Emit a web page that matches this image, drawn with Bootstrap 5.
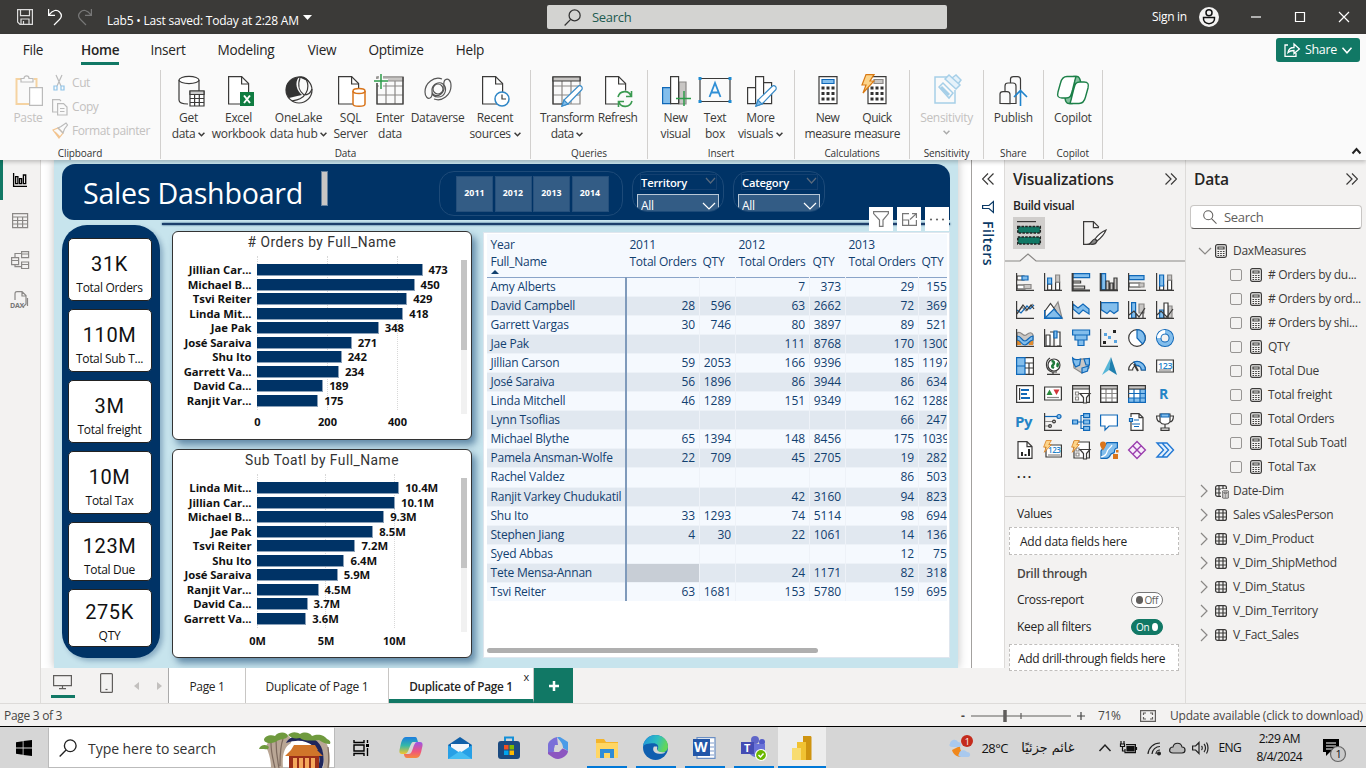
<!DOCTYPE html>
<html lang="en">
<head>
<meta charset="utf-8">
<title>Lab5</title>
<meta name="viewport" content="width=device-width, initial-scale=1">
<link href="https://cdn.jsdelivr.net/npm/bootstrap@5.3.0/dist/css/bootstrap.min.css" rel="stylesheet">
<style>
*{box-sizing:border-box}
body{width:1366px;height:768px;overflow:hidden;font-family:"Open Sans","Noto Sans",sans-serif;font-size:12px;line-height:16px;color:#252423;background:#f3f2f1;letter-spacing:-.025em;white-space:nowrap}
svg{display:block;flex:none;overflow:visible}
svg:not([fill]){fill:none}
svg:not([stroke-width]){stroke-width:1.2}
.k{stroke:#3b3a39}.b{stroke:#1068b8}.g{stroke:#8a8886}.lb{fill:#83beec}.lg{fill:#c8c6c4}.wf{fill:#fff}.kf{fill:#252423}.bf{fill:#1068b8}
.titlebar{height:34px;background:#3b3a38;color:#fff}
.titlesearch{width:400px;height:24px;background:#d3d3d1;color:#215b50;border-radius:2px;font-size:13px;margin-left:235px;padding-left:17px;gap:11px}
.ribbon{height:126px;background:#fafafa;position:relative;z-index:3;box-shadow:0 2px 4px rgba(0,0,0,.22)}
.tabs{height:32px;font-size:13.6px;letter-spacing:-.02em}
.tabs span{height:31px;line-height:31px;text-align:center;display:block}
.tabs .on{font-weight:600;border-bottom:3px solid #117865}
.sharebtn{width:84px;height:24px;background:#117865;border-radius:3px;color:#fff;font-weight:500;font-size:12.5px}
.grp{height:89px;border-right:1px solid #d2d0ce;position:relative}
.grplabel{font-size:10px;height:12px;line-height:12px;text-align:center;color:#333;letter-spacing:-.01em;margin-top:-1px}
.tool{display:flex;flex-direction:column;align-items:center;height:78px;text-align:center;font-size:12px;color:#3b3a39}
.tool svg{margin:5px 0 3px;width:30px;height:32px}
.dim{color:#c3c1bf}
.rail{width:41px;background:#f3f2f1;border-right:1px solid #dddbd9}
.rail div{height:40px;display:flex;align-items:center;justify-content:center}
.rail .on{border-left:3px solid #117865;padding-right:3px}
.stage{width:930px;background:#fff;padding-left:13px;height:508px;overflow:hidden}
.report{width:904px;height:508px;background:#c7e4ed;box-shadow:0 0 9px rgba(0,0,0,.25);padding:4px 8px 0 8px;position:relative}
.banner{height:56px;background:#036;border-radius:13px 14px 0 12px;color:#fff}
.banner h1{font-size:28.6px;line-height:40px;font-weight:400;margin:9px 0 0 21px;width:238px;letter-spacing:-.008em}
.slicer{width:184px;height:45px;border:1px solid #1d4a78;border-radius:15px;margin:7px 0 0 111px;padding:4px 0 0 16px;gap:1.5px}
.slicer span{width:37px;height:36px;background:#335c85;border:1px solid #254f7b;font-size:8.8px;font-weight:700;line-height:33px;text-align:center;letter-spacing:.01em}
.drop{width:92px;height:41px;border:1px solid #1d4a78;border-radius:15px;margin-top:7px;padding:2px 4px 0;overflow:hidden}
.drop .dt{height:16px;border:1px solid #123f70;margin:0 2px 0 3px;font-size:11.2px;font-weight:600;line-height:16px;padding:0 1px 0 0;letter-spacing:-.015em}
.drop .ds{height:22px;margin-top:4px;border:1.5px solid #b9c8d7;background:#335c85;line-height:22px;padding:0 3px;font-size:12px}
.rule{height:2px;background:#1d3f6b;margin:3px 0 1px 100px;box-shadow:0 0 2px #036}
.side{width:98px;height:433px;background:#036;border-radius:25px;padding:13px 8.5px 0 5.5px;margin-top:-1px;box-shadow:3px 3px 5px rgba(0,51,102,.3)}
.kpi{height:63px;margin-bottom:8px;background:#fff;border:1px solid #222;border-radius:5px;text-align:center;color:#111;padding-top:12px}
.kpi b{display:block;font:400 20px/26px Roboto,sans-serif;letter-spacing:.03em}
.kpi span{display:block;line-height:18px;font-size:12px;padding-top:2px}
.viz{width:300px;height:209px;background:#fff;border:1px solid #333;border-radius:6px;box-shadow:4px 5px 7px rgba(0,51,102,.5);position:relative;margin-bottom:9px}
.viz h2{font:400 13.8px/20px Roboto,sans-serif;letter-spacing:.035em;text-align:center;margin:0;height:33px;color:#333}
.plot{height:154px}
.bars{width:288px;font-size:11.3px;font-weight:700;color:#111;position:relative;letter-spacing:-.005em;padding-top:3px}
.brow{height:14.5px;display:flex;align-items:center;line-height:14px}
.brow .nm{width:78.5px;display:flex;justify-content:flex-end;margin-right:5.5px}
.brow i{height:12px;background:#036;border:1px solid #8aa0b8;border-width:0 1px 1px 0;margin-right:6px}
.gridline{position:absolute;top:-4px;height:154px;border-left:1px dotted #d8d8d8}
.axis{font-size:11px;font-weight:700;color:#111;height:16px;position:relative;letter-spacing:0}
.axis span{position:absolute;transform:translateX(-50%);top:0}
.vs{width:5.5px;height:154px;background:#f1f1f1}.vs div{height:90px;background:#c4c4c4}
.matrix{width:467px;height:426px;background:#fff;border:1px solid #dfe6ee;padding:1px 2px 0 3px;margin-left:11px;color:#12406f;font-size:12px}
.mwin{overflow:hidden;height:414px}
.mgrid{table-layout:fixed;width:467px;border-collapse:collapse;letter-spacing:-.02em}
.mgrid td{padding:0 3.5px;text-align:right;line-height:18px;border-right:1px solid #eef2f8;overflow:hidden;letter-spacing:-.005em}
.mgrid tbody tr{height:19.06px;border-top:1px solid #edf2f8}
.mgrid td:first-child{text-align:left;border-right:2px solid #7f9abb;letter-spacing:-.018em}
.mgrid tr{background:#f5f9fe}.mgrid tbody tr:nth-child(even){background:#e1e8f0}
.mgrid th{font-weight:400;padding:0 3.5px;text-align:left;line-height:17px;overflow:visible}
.mgrid thead tr:last-child{border-bottom:1.5px solid #8aa4c8}
.mgrid .hot{background:#c8ced6}
.hs{width:331px;height:5px;border-radius:3px;background:#afafaf}
.over{position:absolute;top:47px;right:9px;display:flex;gap:4px}
.over div{width:24px;height:24px;background:#fff;display:flex;align-items:center;justify-content:center}
.filters{width:34px;background:#fff;border-left:1px solid #a3a19f;border-right:1px solid #dddbd9;height:508px;color:#0b3a66}
.filters span{writing-mode:vertical-rl;font-size:14px;font-weight:600;letter-spacing:.035em;line-height:18px}
.pane{height:543px;background:#f3f2f1}
.vp{width:180px}.dp{width:180px;border-left:1px solid #dddbd9}
.pt{font-size:15.6px;font-weight:600;height:38px;line-height:38px;letter-spacing:-.012em}
.vgrid{display:grid;grid-template-columns:repeat(6,28px);grid-auto-rows:28px;margin:5px 0 0 6px;place-items:center}
.well{background:#fff;border:1px dashed #c0bebc;height:28px;line-height:27px;margin:0 6px 0 4px;padding-left:10px;letter-spacing:-.022em}
.tog{width:32px;height:16px;border-radius:8px;border:1px solid #777;background:#fff;font-size:10px;line-height:14px;color:#605e5c;display:flex;align-items:center;gap:1px;padding:0 4px}
.tog i{width:8px;height:8px;border-radius:50%;background:#605e5c}
.tog.on{background:#117865;border-color:#117865;color:#fff;gap:3px}.tog.on i{background:#fff}
.dsearch{height:24px;border:1px solid #c8c6c4;border-bottom-color:#605e5c;border-radius:4px;background:#fff;margin:7px 4px 0;color:#605e5c;font-size:13px;padding-left:12px;gap:7px}
.trow{height:24px;display:flex;align-items:center;color:#3b3a39}
.tcheck{width:12px;height:12px;border:1px solid #979593;border-radius:2px;margin:0 8px 0 44px}
.strip{height:35px;width:964px}
.ptab{height:35px;background:#fff;border-right:1px solid #c8c6c4;line-height:37px;text-align:center;letter-spacing:-.02em}
.status{height:24px;border-top:1px solid #dddbd9;color:#484644;font-size:12px;border-bottom:1.5px solid #000;padding-top:2px}
.taskbar{height:41px;background:#d6d6d6;color:#111}
.tsearch{width:287px;height:41px;background:#fff;border:1px solid #bbb;border-top-color:#ddd;font-size:14px;padding-left:10px;color:#333}
.app{height:41px;width:49px;display:flex;align-items:center;justify-content:center}
.app.run{border-bottom:2.5px solid #0078d7;margin:0 4.4px;width:40.2px;padding-top:2px}
</style>
</head>
<body>
<svg width="0" height="0" style="position:absolute"><defs>
<symbol id="calc" viewBox="0 0 12 14"><rect x=".6" y=".6" width="10.8" height="12.8" rx="1.8" class="k"/><path d="M3 3h6v2H3z" class="k"/><path d="M2.5 7.5h1.6M5.2 7.5h1.6M7.9 7.5h1.6M2.5 9.5h1.6M5.2 9.5h1.6M7.9 9.5h1.6M2.5 11.5h1.6M5.2 11.5h1.6M7.9 11.5h1.6" class="k" /></symbol>
<symbol id="tbl" viewBox="0 0 12 12"><rect x=".6" y=".6" width="10.8" height="10.8" rx="2" class="k"/><path d="M.6 4h10.8M.6 8h10.8M4 .6v10.8M8 .6v10.8" class="k"/></symbol>
<symbol id="chev" viewBox="0 0 6 4"><path d="M.5.5 3 3 5.5.5" stroke="currentColor" stroke-width="1.3"/></symbol>
<symbol id="lens" viewBox="0 0 16 16"><circle cx="10" cy="6" r="5.2" stroke="currentColor"/><path d="M6.3 9.8.6 15.5" stroke="currentColor"/></symbol>
<symbol id="dbl" viewBox="0 0 12 12"><path d="M.5.5 6 6 .5 11.500M6 .5 11.500 6 6 11.500" stroke="#3b3a39"/></symbol>
<symbol id="pageic" viewBox="0 0 22 30"><path d="M.6.6h13l7 7V28H.6z" class="k" fill="#fff"/><path d="M13.600.6V8h7" class="k"/></symbol>
<symbol id="pen" viewBox="0 0 22 22"><path d="m1 21 2-6L17 1.500a2.400 2.400 0 0 1 3.500 3.500L7 19z" stroke="#3a8cc8" fill="#fff"/><path d="m1 21 2-6 4 4z" fill="#83beec" stroke="#3a8cc8"/></symbol>
<symbol id="bolt" viewBox="0 0 14 20"><path d="M5 .6h8L9 7h4L2 19l3-8H1z" fill="#fcd48a" stroke="#d97a14"/></symbol>
</defs></svg>

<header class="titlebar d-flex align-items-center">
  <svg width="16" height="16" style="margin-left:17px" stroke="#ddd"><path d="M.6.6h14.800v14.800H3l-2.400-2.400zM3.500.6v6h9v-6M4 15V10h8v5M6.500 15v-3"/></svg>
  <svg width="14" height="16" style="margin-left:15px" stroke="#fff"><path d="M.6 0v6.400H7M.8 6.200C5 .5 9 .5 11.500 3c3 3 2 5.500 0 7.500L6 16"/></svg>
  <svg width="14" height="16" style="margin-left:16px" stroke="#777"><path d="M13.400 0v6.400H7M13.200 6.200C9 .5 5 .5 2.500 3c-3 3-2 5.500 0 7.500L8 16"/></svg>
  <span style="margin-left:15px;padding-top:6px;width:190px;letter-spacing:-.017em" class="lh-sm">Lab5 • Last saved: Today at 2:28 AM</span>
  <svg width="9" height="5" style="margin-left:6px"><path d="M0 0h9L4.500 5z" fill="#fff"/></svg>
  <div class="titlesearch d-flex align-items-center"><svg width="17" height="17" color="#333"><use href="#lens"/></svg>Search</div>
  <span style="margin-left:205px;width:37px">Sign in</span>
  <svg width="20" height="20" style="margin-left:10px"><circle cx="10" cy="10" r="10" fill="#f3f2f1"/><circle cx="10" cy="5.800" r="3" stroke="#111" stroke-width="1.5"/><path d="M4.500 10.500h11c.5 4-2 6.200-5.500 6.200s-6-2.200-5.500-6.200z" stroke="#111" stroke-width="1.500"/></svg>
  <svg width="10" height="10" style="margin-left:32px" stroke="#fff"><path d="M0 5h10"/></svg>
  <svg width="10" height="10" style="margin-left:34px" stroke="#fff"><path d="M.5.5h9v9h-9z"/></svg>
  <svg width="10" height="10" style="margin-left:34px" stroke="#fff"><path d="m0 0 10 10M10 0 0 10"/></svg>
</header>

<section class="ribbon">
  <div class="tabs d-flex">
    <span style="margin-left:17px;width:32px">File</span><span class="on" style="margin-left:32px;width:38px">Home</span><span style="margin-left:29px;width:40px">Insert</span><span style="margin-left:28px;width:60px">Modeling</span><span style="margin-left:30px;width:32px">View</span><span style="margin-left:29px;width:58px">Optimize</span><span style="margin-left:28px;width:34px">Help</span>
    <div class="sharebtn d-flex align-items-center justify-content-between ms-auto mt-1 ps-2 pe-2" style="margin-right:6px">
      <svg width="16" height="14" stroke="#fff" stroke-width="1.3"><path d="M4 2H1v11.400h11V10M4 9.500C4.500 6 6.500 4.500 10 4.500V1l5.400 5-5.400 4.500V7.500C7.500 7.500 5.500 8 4 9.500z"/></svg>Share<svg width="10" height="7" stroke="#fff" stroke-width="1.5"><path d="m.5.8 4.500 5 4.500-5"/></svg></div>
  </div>
  <div class="d-flex" style="padding-top:4px">
    <div class="grp" style="width:161px">
      <div class="d-flex dim" style="height:78px;padding-left:13px">
        <div class="tool dim" style="width:30px"><svg width="30" height="32" viewBox="0 0 30 32"><path d="M8 4H3.500v25H16M21 4h2.500v8" stroke="#f5d3a2" stroke-width="2"/><path d="M8 7V3.500h3c0-3.500 5-3.500 5 0h4V7z" stroke="#bbb"/><path d="M16.600 12.600h12.800v17.800H16.600z" stroke="#bbb" fill="#fff"/></svg>Paste</div>
        <div style="margin-left:9px;letter-spacing:-.035em">
          <div class="d-flex align-items-center" style="height:24px;gap:6px;margin-top:1px"><svg width="14" height="16" stroke="#bbb"><path d="M4 0l5 11M10 0 5 11"/><path d="M2 11h3v4H2zM9 11h3v4H9z" stroke="#8fc3e8"/></svg>Cut</div>
          <div class="d-flex align-items-center" style="height:24px;gap:4px"><svg width="16" height="16" stroke="#bbb"><path d="M5 13H.6V.6h7L9 2M5.600 4.600h6l3.400 3.400v8H5.600zM8 9.500h4.500M8 12.500h4.500"/></svg>Copy</div>
          <div class="d-flex align-items-center" style="height:24px;gap:4px"><svg width="16" height="16" stroke="#bbb"><path d="m1 7 5-2 5 5-4 5zM3 9l5 5" stroke="#f3c48f"/><path d="m6 5 3-1.500 5-3.500L15.500 2l-3 4L11 10z"/></svg>Format painter</div>
        </div>
      </div>
      <div class="grplabel">Clipboard</div>
    </div>
    <div class="grp" style="width:370px">
      <div class="d-flex" style="padding-left:1px">
        <div class="tool" style="width:53px"><svg viewBox="0 0 30 32"><path d="M5 5v20c0 3 3 4 9 4M25 5v11" class="k"/><ellipse cx="15" cy="5" rx="10" ry="3.600" class="k" fill="#fff"/><path d="M16 16h14v15H16z" class="k wf"/><path d="M16 16h14v3.500H16z" class="k" fill="#ccc"/><path d="M16 23.500h14M16 27.500h14M20.600 19v12M25.300 19v12" class="k"/></svg>Get<br><span>data <svg class="d-inline m-0" style="width:7px;height:5px"><use href="#chev"/></svg></span></div>
        <div class="tool" style="width:47px"><svg viewBox="0 0 30 32"><use href="#pageic" x="4" y="1" width="22" height="30"/><path d="M16 17h14v14H16z" fill="#107c41"/><path d="m20 20.500 6 7.500M26 20.500 20 28" stroke="#fff" stroke-width="2"/></svg>Excel<br>workbook</div>
        <div class="tool" style="width:73px"><svg viewBox="0 0 30 32"><circle cx="15" cy="15" r="13" class="k"/><path d="M5 23C-2 13 4 3 15 2c-5 6-2 14 3 18-5 1-9 2-13 3zM13 2c6-2 10 0 13 6-4-3-6-4-13-6z" fill="#333"/><path d="M16 3c-3 8 0 14 4 17M22 4c2 4 3 9 0 14-3 6-9 7-14 8M20 20c4 0 7-3 8-6" class="k"/></svg>OneLake<br><span>data hub <svg class="d-inline m-0" style="width:7px;height:5px"><use href="#chev"/></svg></span></div>
        <div class="tool" style="width:31px"><svg viewBox="0 0 30 32"><use href="#pageic" x="2" y="1" width="22" height="30"/><path d="M17 16v13c0 3 12 3 12 0V16" stroke="#d9741a" fill="#fff" stroke-width="1.5"/><ellipse cx="23" cy="16" rx="6" ry="2.500" stroke="#d9741a" fill="#fff" stroke-width="1.500"/></svg>SQL<br>Server</div>
        <div class="tool" style="width:48px"><svg viewBox="0 0 30 32"><path d="M2 2h26v27H2zM2 11h26M2 20h26M11 6v23M20 6v23" class="g"/><path d="M2 2h26v4H2z" class="g lg"/><path d="M2 7v22h26V2" class="k"/><path d="M6-1v15M-1 6h14" stroke="#fafafa" stroke-width="4"/><path d="M6-1v15M-1 6h14" stroke="#2c9c4a" stroke-width="1.500"/></svg>Enter<br>data</div>
        <div class="tool" style="width:47px"><svg viewBox="0 0 30 32" stroke="#555"><path d="M19 4C11 1 2 8 2 17c0 5 3 7 5 6 3-1 2-5 2-9 1-5 7-8 11-5 5 5 2 13-5 13-4 0-6-2-6-6"/><path d="M11 24c8 3 17-4 17-13 0-6-3-8-6-6-2 2-1 5-1 9-1 5-7 9-11 5"/><circle cx="15" cy="14" r="5"/></svg>Dataverse</div>
        <div class="tool" style="width:68px"><svg viewBox="0 0 30 32"><use href="#pageic" x="2" y="1" width="22" height="30"/><circle cx="22" cy="24" r="7" stroke="#2f86c6" stroke-width="1.500" fill="#fff"/><path d="M22 19.500V24h4" class="k"/></svg>Recent<br><span>sources <svg class="d-inline m-0" style="width:7px;height:5px"><use href="#chev"/></svg></span></div>
      </div><div class="grplabel">Data</div>
    </div>
    <div class="grp" style="width:117px">
      <div class="d-flex justify-content-start"><div class="tool" style="width:72px;letter-spacing:-.04em"><svg viewBox="0 0 30 32"><path d="M1 2h27v27H1zM1 11h27M1 20h27M10 6v23M19 6v23" class="g"/><path d="M28 6V2H1v27h12" class="k"/><path d="M1 2h27v4H1z" class="k lg"/><use href="#pen" x="9" y="10" width="22" height="22"/></svg>Transform<br><span>data <svg class="d-inline m-0" style="width:7px;height:5px"><use href="#chev"/></svg></span></div>
      <div class="tool align-items-center" style="width:29px;letter-spacing:-.04em"><svg viewBox="0 0 30 32"><use href="#pageic" x="2" y="1" width="22" height="30"/><circle cx="22" cy="24" r="8.500" fill="#fafafa"/><path d="M15 22c2-7 11-7 13-1M29 26c-2 7-11 7-13 1M28.500 16v5.500H23M15.500 32v-5.500H21" stroke="#3a9a50" stroke-width="1.600"/></svg>Refresh</div></div><div class="grplabel">Queries</div>
    </div>
    <div class="grp" style="width:147px">
      <div class="d-flex" style="padding-left:9px"><div class="tool" style="width:37px"><svg viewBox="0 0 30 32"><path d="M1.600 12.600h8v16h-8z" class="b lb"/><path d="M18 7h7v22h-7z" class="g lg"/><path d="M9.600 1.600h8v27h-8z" class="k wf"/><path d="M23 16v15M15 23.500h15" stroke="#2c9c4a" stroke-width="1.500"/></svg>New<br>visual</div>
      <div class="tool" style="width:42px"><svg viewBox="0 0 30 32"><path d="M0 3.500h30v23H0z" class="k"/><path d="M-1.500 2h3v3h-3zM28.500 2h3v3h-3zM-1.500 25h3v3h-3zM28.500 25h3v3h-3z" fill="#1f8ad0"/><path d="M9.500 22 15 8l5.500 14M11.500 17.500h7" stroke="#2f8fd6" stroke-width="1.800"/></svg>Text<br>box</div>
      <div class="tool" style="width:49px"><svg viewBox="0 0 30 32"><path d="M1.600 12.600h8v16h-8zM17.600 7.600h8v21h-8zM9.600 1.600h8v27h-8z" class="k wf"/><use href="#pen" x="9" y="10" width="22" height="22"/></svg>More<br><span>visuals <svg class="d-inline m-0" style="width:7px;height:5px"><use href="#chev"/></svg></span></div></div><div class="grplabel">Insert</div>
    </div>
    <div class="grp" style="width:115px">
      <div class="d-flex" style="padding-left:8px;letter-spacing:-.04em"><div class="tool" style="width:49px"><svg viewBox="0 0 30 32"><path d="M6 1.600h18v27H6z" class="k wf"/><path d="M9 4.500h12v4H9z" class="b lb"/><path d="M8.500 13h13M8.500 18.500h13M8.500 24h13" stroke="#333" stroke-width="3" stroke-dasharray="3 2"/></svg>New<br>measure</div>
      <div class="tool" style="width:50px"><svg viewBox="0 0 30 32"><path d="M6 1.600h18v27H6z" class="k wf"/><path d="M12 4.500h9v4h-9z" class="g lg"/><path d="M8.500 13h13M8.500 18.500h13M8.500 24h13" stroke="#333" stroke-width="3" stroke-dasharray="3 2"/><use href="#bolt" x="-1" y="-1" width="14" height="20"/></svg>Quick<br>measure</div></div><div class="grplabel">Calculations</div>
    </div>
    <div class="grp" style="width:74px"><div class="tool dim"><svg viewBox="0 0 30 32" stroke="#a6cfe8" stroke-width="1.500"><path d="M16 2H3v26h20V15"/><path d="m7 12 4-4 10 10-4 5z"/><path d="m9 12 8 8" stroke-width="3"/><path d="m13 4 4-4 11 10-4 4zM20 3l4-3 5 5-3 4" fill="#e6f2fa"/></svg>Sensitivity<br><svg class="m-0 mt-1" style="width:7px;height:5px;color:#aaa"><use href="#chev"/></svg></div><div class="grplabel">Sensitivity</div></div>
    <div class="grp" style="width:59.500px"><div class="tool"><svg viewBox="0 0 30 32"><path d="M2 28.500V19c0-2 1-2.400 3-2.400h4c2 0 3 1 3 3v9zM7 16v-5c0-2 1-3 3-3h5c2 0 3 1 3 3v17.500h-6M12.500 8V4c0-1.500 1-2.400 3-2.400h4c2 0 3 1 3 3V15" class="k"/><path d="M22.500 31V16M16 22l6.500-6.500L29 22" stroke="#1f83cc" stroke-width="1.600"/></svg>Publish</div><div class="grplabel">Share</div></div>
    <div class="grp" style="width:59.500px"><div class="tool"><svg viewBox="0 0 30 32" stroke="#1c8048" stroke-width="1.400"><path d="M16 1.500h3c3 0 3 3 4 7h-7zM14 28.500h-3c-3 0-4-3-4-7h7z" fill="#86c0a0"/><path d="M18 1.500H9C5 1.500 3.500 4 2.500 8L0 17c-1 4 0 6 4 6h4c5 0 5-3 6.500-8l2-8c.6-3 1.500-5 1.500-5.500zM12 28.500h9c4 0 5.500-2.500 6.500-6.500L30 13c1-4 0-6-4-6h-4c-5 0-5 3-6.500 8l-2 8c-.6 3-1.500 5-1.500 5.500z" fill="#fff"/></svg>Copilot</div><div class="grplabel">Copilot</div></div>
    <svg width="9" height="6" class="ms-auto align-self-end" style="margin:0 5px 5px 0" stroke="#222" stroke-width="2"><path d="M.5 5.500 4.500 1l4 4.500"/></svg>
  </div>
</section>

<main class="d-flex" style="height:543px">
 <nav class="rail">
  <div class="on"><svg width="14" height="14" stroke="#000" stroke-width="1.300"><path d="M.6 0v13.400H14M2.600 3.600h2.300v7H2.600zM6.600 5.600h2v5h-2zM10.400 2h2.300v8.600h-2.300z"/></svg></div>
  <div><svg width="16" height="15" class="g"><path d="M.6.6h15v14H.6zM.6 4h15M.6 7.500h15M.6 11h15M5.600 4v10.600M10.600 4v10.600"/></svg></div>
  <div><svg width="18" height="18" class="g"><path d="M.6 6.600h7v7h-7zM.6 9.500h7M10.600.6h7v6h-7zM10.600 3h7M10.600 11h7v6.500h-7zM10.600 13.500h7M4 6.600V2.500h6.600M4 13.600v2h6.600"/></svg></div>
  <div><svg width="18" height="18" class="g"><path d="M4 9V3C4 1 5 .6 6 .6h5l4 4V13l-3 3M11 .6V5h4M16.500 7v8"/><text x="-1" y="16.500" font-size="7" font-weight="700" fill="#777" stroke="none" letter-spacing="-.2">DAX</text></svg></div>
 </nav>
 <div>
  <div class="d-flex">
  <div class="stage"><div class="report">
   <div class="banner d-flex">
    <h1>Sales Dashboard</h1><div style="width:7px;height:35px;background:#c8c6c4;border:1px solid #64819e;margin-top:7px"></div>
    <div class="slicer d-flex"><span>2011</span><span>2012</span><span>2013</span><span>2014</span></div>
    <div class="drop" style="margin-left:9px"><div class="dt d-flex justify-content-between">Territory<svg width="9" height="6" style="margin-top:3px" stroke="#5a6a7d"><path d="m0 0 4.500 5L9 0"/></svg></div><div class="ds d-flex justify-content-between">All<svg width="12" height="7" style="margin:8px 0 0" stroke="#fff"><path d="m0 0 6 6 6-6"/></svg></div></div>
    <div class="drop" style="margin-left:9px"><div class="dt d-flex justify-content-between">Category<svg width="9" height="6" style="margin-top:3px" stroke="#5a6a7d"><path d="m0 0 4.500 5L9 0"/></svg></div><div class="ds d-flex justify-content-between">All<svg width="12" height="7" style="margin:8px 0 0" stroke="#fff"><path d="m0 0 6 6 6-6"/></svg></div></div>
   </div>
   <div class="rule"></div>
   <div class="d-flex">
    <div class="side">
     <div class="kpi"><b>31K</b><span>Total Orders</span></div><div class="kpi"><b>110M</b><span>Total Sub T...</span></div><div class="kpi"><b>3M</b><span>Total freight</span></div><div class="kpi"><b>10M</b><span>Total Tax</span></div><div class="kpi" style="height:59px;padding-top:10px"><b>123M</b><span>Total Due</span></div><div class="kpi" style="height:58px;padding-top:9px"><b>275K</b><span>QTY</span></div>
    </div>
    <div style="margin:5px 0 0 12px">
     <div class="viz"><h2># Orders by Full_Name</h2><div class="plot d-flex" style="margin-top:-5px"><div class="bars" id="c1"></div><div class="vs"><div></div></div></div><div class="axis"><span style="left:84.500px">0</span><span style="left:154.500px">200</span><span style="left:224.500px">400</span></div></div>
     <div class="viz"><h2>Sub Toatl by Full_Name</h2><div class="plot d-flex" style="margin-top:-5px"><div class="bars" id="c2"></div><div class="vs"><div></div></div></div><div class="axis"><span style="left:84.500px;top:1px">0M</span><span style="left:153px;top:1px">5M</span><span style="left:221.500px;top:1px">10M</span></div></div>
    </div>
    <div class="matrix" style="margin-top:6px">
     <div class="mwin"><table class="mgrid"><colgroup><col style="width:139px"><col style="width:73px"><col style="width:36px"><col style="width:74px"><col style="width:36px"><col style="width:73px"><col style="width:36px"></colgroup>
      <thead><tr style="height:19px;vertical-align:bottom"><th>Year</th><th>2011</th><th></th><th>2012</th><th></th><th>2013</th><th></th></tr>
      <tr style="height:24.500px;vertical-align:top"><th>Full_Name<svg width="8" height="4"><path d="M0 4h8L4 0z" fill="#12406f"/></svg></th><th>Total Orders</th><th>QTY</th><th>Total Orders</th><th>QTY</th><th>Total Orders</th><th>QTY</th></tr></thead><tbody id="mb"></tbody></table></div>
     <div class="hs"></div>
    </div>
   </div>
   <div class="over"><div><svg width="16" height="16" stroke="#777"><path d="M.6.6h14.800v2L10 9v6.400H6.500V9L.6 2.600z"/></svg></div><div><svg width="15" height="13" stroke="#777"><path d="M7 .6H.6v11.800h13.800V7M.6 7h6v5.400M8 6.500 14.400.6M10 .6h4.400V5"/></svg></div><div><svg width="16" height="3" fill="#666"><circle cx="2" cy="1.500" r="1.100"/><circle cx="8" cy="1.500" r="1.100"/><circle cx="14" cy="1.500" r="1.100"/></svg></div></div>
  </div></div>
  <div class="filters d-flex flex-column align-items-center"><svg width="12" height="12" style="margin-top:13px;transform:scaleX(-1)"><use href="#dbl"/></svg><svg width="12" height="12" style="margin:16px 0 8px" stroke="#0b3a66"><path d="M11.400.6v10.800L7 7.500H.6v-3H7z"/></svg><span>Filters</span></div>
  </div>
  <div class="strip d-flex">
   <div class="d-flex" style="width:128px;border-right:1px solid #aaa">
    <div style="width:24px;margin-left:10px;border-bottom:3px solid #117865;height:30px;padding:7px 0 0 2px"><svg width="19" height="14" stroke="#605e5c"><path d="M.6.6h17.800v10H.6zM9.500 10.600v3M6 13.600h7"/></svg></div>
    <svg width="13" height="20" style="margin:5px 0 0 25px" stroke="#605e5c"><rect x=".6" y=".6" width="11.800" height="18.800" rx="1"/><path d="M5.500 16.500h2"/></svg>
    <svg width="5" height="8" style="margin:14px 0 0 21px" fill="#c2c0be"><path d="M5 0v8L0 4z"/></svg><svg width="5" height="8" style="margin:14px 0 0 18px" fill="#c2c0be"><path d="M0 0v8l5-4z"/></svg>
   </div>
   <div class="ptab" style="width:77px;letter-spacing:-.03em">Page 1</div><div class="ptab" style="width:143px">Duplicate of Page 1</div>
   <div class="ptab position-relative" style="width:145px;border-bottom:4px solid #117865;font-weight:600;font-size:11.800px;letter-spacing:-.025em">Duplicate of Page 1<span class="position-absolute fw-normal" style="right:4px;top:2px;line-height:14px;font-size:11px">x</span></div>
   <div class="d-flex align-items-center justify-content-center" style="width:39px;background:#117865"><svg width="10" height="10" stroke="#fff" stroke-width="2.500"><path d="M5 0v10M0 5h10"/></svg></div>
  </div>
 </div>

 <aside class="pane vp">
  <div class="pt d-flex align-items-center ps-2" style="padding-right:8px"><span class="flex-fill">Visualizations</span><svg width="12" height="12"><use href="#dbl"/></svg></div>
  <div class="ps-2 fw-semibold" style="height:19px;line-height:15px;letter-spacing:-.035em">Build visual</div>
  <div class="d-flex ps-2"><div style="width:32px;height:32px;background:#d0cecc;padding:4px"><svg width="24" height="24"><path d="M0 .6h19" class="k"/><path d="M.8 5.500h22.500v6.500H.8zM.8 16h22.500v7H.8z" fill="#117865" stroke="#222" stroke-width="1.500" stroke-dasharray="2.500 1.200"/></svg></div>
  <svg width="24" height="24" style="margin:4px 0 0 38px"><path d="M7 23.400H.6V.6h9.800l5.500 5.500M10.400.6v6h5.600" class="k"/><path d="M23 9c-5 2-8 5-11 9l2 2c4-3 7-6 9-11z" class="k wf"/><path d="M12 18c-3 0-3 4-6 5 4 1 7 0 8-3z" fill="#888" class="k"/></svg></div>
  <svg width="180" height="9" style="margin-top:4px" class="g"><path d="M0 8h15l8-7 8 7h149"/></svg>
  <div class="vgrid" style="margin-top:6px">
<svg width="18" height="18"><path d="M1 3h7v4H1zM1 12h8v4H1z" class="k wf"/><path d="M6 3h6v4H6z" class="b lb"/><path d="M8 11.500h7v4H8z" class="g lg"/><path d="M.6 0v17.400H18" class="k"/></svg>
<svg width="18" height="18"><path d="M3.600 11h4v6h-4zM11.600 9h4v8h-4z" class="k wf"/><path d="M3.600 5h4v6h-4z" class="b lb"/><path d="M11.600 2h4v7h-4z" class="g lg"/><path d="M.6 0v17.400H18" class="k"/></svg>
<svg width="18" height="18"><path d="M.6.6h17v4H.6z" class="b lb"/><path d="M.6 8h8v2H.6zM.6 13h12v3H.6z" class="k lg"/><path d="M.6 0v17.400H18" class="k" stroke-width="2"/></svg>
<svg width="18" height="18"><path d="M1.600.6h4v16h-4z" class="b lb"/><path d="M6 8h3v9H6zM10 10h3v7h-3zM14 5h3v12h-3z" class="k lg"/><path d="M.6 0v17.400H18" class="k" stroke-width="1.800"/></svg>
<svg width="18" height="18"><path d="M1 10h11v4H1z" class="k wf"/><path d="M1 2.600h15v4H1z" class="b lb"/><path d="M11 10h5v4h-5z" class="g lg"/><path d="M.6 0v17.400H18" class="k"/></svg>
<svg width="18" height="18"><path d="M3.600 12h4v5h-4zM11.600 7h4v10h-4z" class="k wf"/><path d="M3.600 2h4v11h-4z" class="b lb"/><path d="M11.600 2h4v5h-4z" class="g lg"/><path d="M.6 0v17.400H18" class="k"/></svg>
<svg width="18" height="18"><path d="m1 12 5-6 4 4 7-7" class="g"/><path d="m1 9 4 3 6-7 3 3 4-4" class="b"/><path d="m1 13 6-9 4 5 4-5 3 4M.6 0v17.400H18" class="k"/></svg>
<svg width="18" height="18"><path d="m8 10 6-9 4 16z" class="g lg"/><path d="m1 10 5.500-7.500L12 10v7H1z" class="k wf"/><path d="m1 17 5-5 4-4 8 9z" class="b lb"/><path d="M.6 9v8.400H18" class="b"/></svg>
<svg width="18" height="18"><path d="m1 3 5 4 5-4 6 5v5l-6-4-4 4-6-5z" class="b lb"/><path d="M.6 0v17.400H18" class="k"/></svg>
<svg width="18" height="18"><path d="M1 1.600h17v8l-4 3-4-3-3 3-6-4z" class="b lb"/><path d="M.6 0v17.400H18" class="k"/></svg>
<svg width="18" height="18"><path d="M3.600 1.600h4V17h-4z" class="b lb"/><path d="M11 3h5v9h-5z" class="g lg"/><path d="m1 14 5-4 5 6 6-9M8 12v5M15 10v7M.6 0v17.400H18" class="k"/></svg>
<svg width="18" height="18"><path d="M3.600 9h4v8h-4z" class="b lb"/><path d="M12 5h4v12h-4z" class="g lg"/><path d="M8 2h4v15H8z" class="k wf"/><path d="m1 14 4-4 6 6 6-8M.6 0v17.400H18" class="k"/></svg>
<svg width="18" height="18"><path d="M1 4c4-3 6 4 9 2 4-3 6-3 7 0v9H1z" class="g lg"/><path d="M1 9h4v7H1zM13 10h4v6h-4z" fill="#e08a2c"/><path d="M1 7c5 0 4 5 8 5 3 0 4-5 8-5v4c-4 0-5 5-8 5-4 0-4-5-8-5z" class="b lb"/><path d="M.6 0v17.400H18" class="k"/></svg>
<svg width="18" height="18"><path d="M2 6h4v11H2zM6 3h4v14M12 9V3h4v14h-3" class="k wf"/><path d="M10 9V2h3v7z" class="b lb"/><path d="M.6 0v17.400H18" class="k"/></svg>
<svg width="18" height="18" class="b"><path class="lb" d="M.6 1h17v5h-17zM3 6h12v5H3zM6 11h6v5.500H6z"/></svg>
<svg width="18" height="18"><path d="M.6 0v17.400H18" class="k"/><path d="M4 4h3v3H4zM8 7h3v3H8zM14 11h3v3h-3z" fill="#58a4e0"/><path d="M13 1h3v3h-3zM3 12h3v3H3z" class="kf"/></svg>
<svg width="18" height="18"><circle cx="9" cy="9" r="8.300" class="k wf"/><path d="M9 .7V9l5.500 6A8.300 8.300 0 0 0 9 .7z" class="b lb"/></svg>
<svg width="18" height="18"><circle cx="9" cy="9" r="6.300" stroke="#1068b8" stroke-width="5.500"/><circle cx="9" cy="9" r="6.300" stroke="#83beec" stroke-width="3.500"/><path d="M9 2.700A6.300 6.300 0 0 0 2.700 9" stroke="#fff" stroke-width="3.500"/></svg>
<svg width="18" height="18"><path d="M.6.6h16.800v16.800H.6z" class="k wf"/><path d="M.6.6H9v16.800H.6zM.6 9H9" class="b lb"/><path d="M9 6h8.400M9 11h8.400M13 6v5M13 11v6" class="k"/></svg>
<svg width="18" height="18"><circle cx="10" cy="8" r="6" class="k wf"/><path d="M7.500 4.500c3-1 3 2 1.500 3.500s-1 2 1 3M13 6c1 1 1 2.500 0 4" stroke="#217a3c" stroke-width="2.500"/><path d="M6 1c-5 3-5 12 2 14h5M3 17.400h13M9 15v2" class="k"/></svg>
<svg width="18" height="18"><path d="M1 2c5 3 9-2 16 0v9l-7 5-8-5z" class="g lg"/><path d="M.6 1c2 2 5 2 8 1l-1 6-4 2c-2-3-3-5-3-9zM12 2l5.400-.5V8H14zM10 11l6.500-2-1 5-5.500 2z" class="b lb"/></svg>
<svg width="18" height="18"><path d="M11 0 2 18l7-5z" fill="#56b6d8"/><path d="m11 0 6 18-8-5z" fill="#1f7fae"/></svg>
<svg width="18" height="18"><path d="M.6 13a8.400 8.400 0 0 1 16.800 0h-4a4.400 4.400 0 0 0-8.800 0z" class="k wf"/><path d="M6 5a8.400 8.400 0 0 1 11.400 8h-4a4.400 4.400 0 0 0-5-4.500z" class="b lb"/><path d="m6 7 4 7" class="k" stroke-width="2"/></svg>
<svg width="18" height="18"><path d="M.6 3h16.800v12H.6z" class="k wf"/><path d="M3 13h12" class="g"/><text x="2" y="11.500" font-size="9" font-weight="600" fill="#1f83cc" letter-spacing="-.4">123</text></svg>
<svg width="18" height="18"><path d="M.6.6h16.800v16.800H.6z" class="k wf"/><path d="M3.600 3v12" class="k"/><path d="M5 5h8M5 9h6M5 13h9" class="b" stroke-width="2"/></svg>
<svg width="18" height="18"><path d="M.6 2h16.800v13H.6z" class="k wf"/><path d="M2.500 10 5.500 4.500 8.500 10z" fill="#2c8a3e"/><path d="M9.500 4.500h6l-3 5.500z" fill="#d13438"/><path d="M3 12.500h12" class="g"/></svg>
<svg width="18" height="18"><path d="M.6.6h16.800v16.800H.6z" class="k wf"/><path d="M.6.6h16.800V4H.6z" class="k lg"/><path d="M3.500 7h3v3h-3zM3.500 12h3v3h-3z" class="g"/><path d="M8 8.500h10l-3.500 4V18h-3v-5.500z" class="k wf"/></svg>
<svg width="18" height="18"><path d="M.6.6h16.800v16.800H.6z" class="k wf"/><path d="M.6 8.500h16.800M.6 13h16.800M6 4v13M12 4v13" class="g"/><path d="M.6.6h16.800v16.800H.6z" class="k"/><path d="M.6.6h16.800V4H.6z" class="k lg"/></svg>
<svg width="18" height="18"><path d="M.6.6h16.800v16.800H.6z" class="k wf"/><path d="M.6 13h16.800v4.400H.6zM12 4h5.400v13H12z" class="lb"/><path d="M.6 4h16.800M.6 8.500h16.800M.6 13h16.800M6 4v13M12 4v13M17.400 4v13.400H.6V13" class="b"/><path d="M.6.6h16.800V4H.6z" class="k lg"/></svg>
<svg width="18" height="18"><text x="3" y="14" font-size="14" font-weight="700" fill="#2484c6">R</text></svg>
<svg width="18" height="18"><text x="-1" y="14" font-size="15" font-weight="700" fill="#2484c6" letter-spacing="-.3">Py</text></svg>
<svg width="18" height="18"><path d="M.6 0v17.400H18" class="k"/><path d="M1 3.500h12M1 8.500h8M1 13h5" class="g"/><path d="M1 3.500h12" class="b"/><circle cx="15" cy="3.500" r="2" class="b lb"/><circle cx="10" cy="8.500" r="1.400" class="k"/><circle cx="6" cy="13" r="1.400" class="k"/></svg>
<svg width="18" height="18" class="b"><path d="M6 9h6M12 2.500H9v13h3"/><path d="M.6 7h5v4h-5zM11.600.6h6v4h-6zM11.600 7h6v4h-6zM11.600 13.400h6v4h-6z" class="lb"/></svg>
<svg width="18" height="18"><path d="M.6 2h16.800v11H9l-4 4v-4H.6z" class="b wf"/></svg>
<svg width="18" height="18"><path d="M3 4V.6h8l4 4v12.800H3V9M11 .6v4h4" class="k wf"/><path d="M1.500 5.500h3v3h-3z" class="b lb"/><path d="M6 7h5M4 11h8M6 13.500h5" class="b"/></svg>
<svg width="18" height="18"><path d="M4 1h10v8c-2 3-8 3-10 0zM4 3H.6c0 4 1 6 4 6M14 3h3.400c0 4-1 6-4 6M9 11v4" class="k wf"/><path d="M5 1h8v3H5z" class="b lb"/><path d="M5 15h8v2.400H5z" class="k"/></svg>
<svg width="18" height="18"><path d="M2 .6h9l5 5v11.800H2zM11 .6v5h5" class="k wf"/><path d="M5 11h2v4H5zM8.500 13h2v2h-2zM12 8h2v7h-2z" class="kf"/></svg>
<svg width="18" height="18"><path d="M2 4h15.400v12H2z" class="k wf"/><path d="M4 14h12" class="g"/><text x="4" y="12" font-size="8" font-weight="600" fill="#1f83cc" letter-spacing="-.4">123</text><use href="#bolt" x="-1" y="-1" width="9" height="13"/></svg>
<svg width="18" height="18"><path d="M2 1h15.400v16H2z" class="k wf"/><path d="M4 7h3v3H4zM4 12h3v3H4z" class="g"/><path d="M8 8.500h10l-3.500 4V18h-3v-5.500z" class="k wf"/><use href="#bolt" x="-1" y="-1" width="9" height="13"/></svg>
<svg width="18" height="18"><path d="M7 1.600h10.400V7c-2 0-3 2-3 4s-3 0-4 3c-1 2-2 3.400-4 3.400H1V10z" class="b lb"/><path d="M12 4c-1 3-4 3-5 7s-3 4-6 5" stroke="#fff" stroke-width="1.200"/><path d="M0 3.500a3 3 0 0 1 6 0c0 2-3 6-3 6s-3-4-3-6zM13 13h5v5h-5zM16 9h2.500v2.500H16z" fill="#d9741a"/></svg>
<svg width="18" height="18" stroke="#9b3fae" stroke-width="1.400"><path d="m9 .6 8.400 8.400L9 17.400.6 9zM4.800 4.800l8.400 8.400M13.200 4.800l-8.400 8.400" fill="#f7ecfa"/></svg>
<svg width="18" height="18" stroke="#2278d4" stroke-width="1.400"><path d="M1 2h10l6.500 7-6.500 7H1l6.500-7zM6 2l6.500 7L6 16" fill="#e3effb"/></svg>
  </div>
  <div style="height:33px;padding:5px 0 0 12px;letter-spacing:2px;font-weight:700;border-bottom:1px solid #d2d0ce;line-height:10px">...</div>
  <div style="padding:9px 0 0 12px;height:30px">Values</div>
  <div class="well">Add data fields here</div>
  <div class="fw-semibold" style="padding:11px 0 0 12px;height:31px;color:#484644">Drill through</div>
  <div class="d-flex align-items-center" style="height:27px;padding-left:12px"><span style="width:114px">Cross-report</span><div class="tog"><i></i>Off</div></div>
  <div class="d-flex align-items-center" style="height:27px;padding-left:12px"><span style="width:114px">Keep all filters</span><div class="tog on">On<i></i></div></div>
  <div class="well" style="height:27px;margin-top:4px;padding-left:8px;letter-spacing:-.03em">Add drill-through fields here</div>
 </aside>
 <aside class="pane dp flex-fill">
  <div class="pt d-flex align-items-center ps-2"><span class="flex-fill">Data</span><svg width="12" height="12" style="margin-right:8px"><use href="#dbl"/></svg></div>
  <div class="dsearch d-flex align-items-center"><svg width="14" height="14" style="transform:scaleX(-1)"><use href="#lens"/></svg>Search</div>
  <div id="tree" style="padding-top:10px"></div>
 </aside>
</main>

<footer class="status d-flex align-items-center">
 <span style="margin-left:4px;width:957px">Page 3 of 3</span>
 <b style="width:10px">-</b>
 <svg width="100" height="12" stroke="#605e5c"><path d="M0 6h100M50 3v6"/><path d="M34 0v12" stroke-width="3.500"/></svg>
 <svg width="8" height="8" style="margin-left:6px" stroke="#444"><path d="M4 0v8M0 4h8"/></svg>
 <span style="margin-left:13px;width:25px">71%</span>
 <svg width="16" height="12" style="margin-left:17px" stroke="#605e5c"><path d="M.6.6h14.800v10.800H.6z"/><path d="M3.500 5V3H6M10 3h2.500v2M12.500 7v2H10M6 9H3.500V7"/></svg>
 <span style="margin-left:14px;letter-spacing:-.018em">Update available (click to download)</span>
</footer>

<footer class="taskbar d-flex align-items-start">
 <div class="app" style="width:48px"><svg width="16" height="16" fill="#000"><path d="M0 2.200 6.700 1.200v6.400H0zM7.500 1.100 16 0v7.600H7.500zM0 8.400h6.700v6.400L0 13.800zM7.500 8.400H16V16l-8.500-1.100z"/></svg></div>
 <div class="tsearch d-flex align-items-center"><svg width="18" height="18" color="#222"><use href="#lens"/></svg><span style="margin-left:11px;width:170px;letter-spacing:-.003em;padding-top:2px">Type here to search</span>
  <svg width="76" height="37" style="margin-top:3px" viewBox="0 0 76 37"><path d="M8 16C10 8 18 5 28 4c4 1 6 4 5 8-7 4-9 12-8 25H13c0-8-2-15-5-21z" fill="#b9a695"/><path d="M13 12c0 10 2 16 4 25M18 9c0 10 1 18 3 28M25 8c-3 8-3 18-3 27" stroke="#7d6a5e"/><path d="M58 6c7 1 12 6 13 14 1 6 1 12 0 17h-6c2-14-1-22-9-26z" fill="#b9a695"/><path d="M70 16c1 8 1 14 0 21" stroke="#7d6a5e"/><path d="M28 12c3-6 10-8 18-7 11 1 18 8 19 17 1 6 1 10-1 15h-4c3-10 1-17-5-22-6-5-15-7-27-3z" fill="#20265c"/><path d="M1 18c1-4 6-5 9-3 2 2 0 4-4 3zM6 9c0-4 7-6 11-4 4-5 12-4 13 0-2 4-9 3-11 5-4 3-12 3-13-1zM30 4c4-4 9-3 12-1 5-3 10-1 12 2 7-3 13 0 15 3 3 1 4 3 3 5-5 0-8-2-11-4-8 1-16 1-19-2-5 1-9 0-12-3z" fill="#6f9a3e"/><path d="M36 14h21l3 5H33zM27 25h38l-6-6H33z" fill="#d0752a"/><path d="M31 25h30v12H31z" fill="#9c2f18"/><path d="M35 27h4v10h-4zM41 27h4v10h-4zM47 27h4v10h-4zM53 27h4v10h-4z" fill="#f4a85c"/></svg></div>
 <div class="d-flex" style="padding-left:1.500px">
 <div class="app"><svg width="17" height="16" stroke="#000" stroke-width="1.400"><path d="M1 0v2.500h10V0M1 16v-2.500h10V16M1 5h10v6H1zM14.500 0v3M14.500 8v8"/><path d="M13 4h3v3h-3z" fill="#000" stroke="none"/></svg></div>
 <div class="app" style="margin-left:1px"><svg width="24" height="22" viewBox="0 0 24 22"><defs><linearGradient id="cp1" x2="0" y2="1"><stop stop-color="#1b7de0"/><stop offset=".5" stop-color="#35b8a8"/><stop offset="1" stop-color="#f6c42c"/></linearGradient><linearGradient id="cp2" x2="0" y2="1"><stop stop-color="#9a55e8"/><stop offset=".6" stop-color="#f0567a"/><stop offset="1" stop-color="#f68a3c"/></linearGradient></defs><path d="M7 0h9c2 0 2 2 3 5h-5c-3 0-4 12-8 12H3c-3 0-3-3-2-6C2 6 3 0 7 0z" fill="url(#cp1)"/><path d="M17 21H8c-2 0-3-2-3-4h5c4 0 4-12 8-12h3c3 0 3 3 2 6-1 5-2 10-6 10z" fill="url(#cp2)"/></svg></div>
 <div class="app"><svg width="24" height="22"><path d="M0 8 12 0l12 8v14H0z" fill="#0f5fa8"/><path d="M3 7h18v8H3z" fill="#f3f6fa"/><path d="m0 8 12 8 12-8v14H0z" fill="#28a0e6"/><path d="m0 22 12-8 12 8z" fill="#46bdf2"/></svg></div>
 <div class="app"><svg width="22" height="23"><path d="M7 5V1.500h8V5" stroke="#1590d8" stroke-width="2"/><rect y="5" width="22" height="18" rx="3" fill="#1b4a80"/><path d="M6 9h4.500v4.500H6z" fill="#f25022"/><path d="M11.500 9H16v4.500h-4.500z" fill="#7fba00"/><path d="M6 14.500h4.500V19H6z" fill="#00a4ef"/><path d="M11.500 14.500H16V19h-4.500z" fill="#ffb900"/></svg></div>
 <div class="app"><svg width="20" height="22"><path d="M9 0C5 1 0 4 0 8v8l5 3c1-3 0-8 5-11z" fill="#7a6fd8"/><path d="M9 0h3l8 5v9l-5-3c0-5-3-7-6-11z" fill="#4a9be8"/><path d="M0 15c4 1 9 0 14-4l6 3c0 4-6 8-10 8-3 0-6-2-10-5z" fill="#8c56c0"/><path d="M7 8h6l2 3-4 4H7l-1-3z" fill="#d6d6d6"/></svg></div>
 <div class="app run"><svg width="22" height="20"><path d="M0 1h8l2 3h12v16H0z" fill="#f4b52c"/><path d="M0 5h22v15H0z" fill="#ffd664"/><path d="M4 20v-9h14v9h-4v-5H8v5z" fill="#2f8cd8"/></svg></div>
 <div class="app run"><svg width="25" height="25" viewBox="0 0 24 24"><defs><linearGradient id="ed" x2="1" y2=".3"><stop stop-color="#1f8fe0"/><stop offset=".6" stop-color="#2fbfc0"/><stop offset="1" stop-color="#62d65a"/></linearGradient></defs><circle cx="12" cy="12" r="12" fill="#0f5fb0"/><path d="M0 11C1 4 6 0 12 0c7 0 12 5 12 11 0 4-3 6-7 6-3 0-4-1-3-3 2-4-1-6-4-6C5 8 1 9 0 11z" fill="url(#ed)"/><path d="M10.500 11c-2 3 0 7 5 7 3 0 5-.5 6-1.500-1 0-7.500 1-8-3-.1-1 .5-1.500 0-2.500z" fill="#d6d6d6"/></svg></div>
 <div class="app run"><svg width="23" height="22"><path d="M4 .6h18v20.800H4z" fill="#fff" stroke="#6b8fc4"/><path d="M16 6h5M16 10h5M16 14h5M6 18h15" stroke="#7f9ccc"/><path d="M0 2h17v17H0z" fill="#2256a8"/><text x="1" y="15" font-size="14" font-weight="700" fill="#fff">W</text></svg></div>
 <div class="app run"><svg width="25" height="24"><circle cx="14" cy="4" r="4" fill="#5f66c8"/><circle cx="21" cy="6" r="3" fill="#5059c9"/><path d="M8 8h16v9c-2 5-12 6-16 0z" fill="#6a72d8"/><path d="M0 6h13v12H0z" fill="#444cb4"/><text x="3" y="16" font-size="11" font-weight="700" fill="#fff">T</text><circle cx="20" cy="19" r="5.500" fill="#6bb700" stroke="#fff"/><path d="m17.500 19 2 2 3-3.500" stroke="#fff" stroke-width="1.500"/></svg></div>
 <div class="app run" style="width:48px;margin:0;background:#ededed"><svg width="20" height="24"><path d="M11 0h7c1 0 1.500.5 1.500 1.500V24H11z" fill="#cf9410"/><path d="M5 6h9v18H5z" fill="#f1c232"/><path d="M0 12h9v12H0z" fill="#f8dc70"/></svg></div>
 </div>
 <div class="d-flex align-items-center" style="height:42px;margin-left:123px;font-size:13px;letter-spacing:-.04em">
  <svg width="24" height="24"><path d="M3 14c2 8 12 9 16 4-6 0-8-3-8-8z" fill="#f0881c"/><path d="M1 8c0-4 6-6 8-2 4 0 4 5 1 5H3C0 11 0 8 1 8zM10 18c0-4 6-5 8-2 4 0 4 5 1 5h-7c-3 0-3-3-2-3z" fill="#a9c9ee"/><circle cx="18" cy="5" r="6" fill="#c42b1c"/><text x="15.800" y="8.500" font-size="9" fill="#fff">1</text></svg>
  <span style="margin-left:8px;width:30px">28°C</span><span dir="rtl" style="margin-left:8px;width:55px;font-family:'DejaVu Sans';font-size:12.800px;letter-spacing:0">غائم جزئيًا</span>
  <svg width="12" height="8" style="margin-left:25px" stroke="#222" stroke-width="1.500"><path d="m.5 7 5.500-6 5.500 6"/></svg>
  <svg width="17" height="14" style="margin-left:9px" stroke="#111"><path d="M6 3.600h9.400v8H5V8M16.500 6v3"/><path d="M7 5.500h7v4.500H7z" fill="#111"/><path d="M1 0v3M4 0v3M.5 3h4v2.500h-4zM2.500 5.500V10H5"/></svg>
  <svg width="14" height="14" style="margin-left:10px" stroke="#222"><path d="M1 13A12 12 0 0 1 13 2M5 13a8 8 0 0 1 8-7.500M9 13a4 4 0 0 1 4-4"/><circle cx="12" cy="12.500" r="1.400" fill="#222"/></svg>
  <svg width="16" height="12" style="margin-left:8px" stroke="#222"><path d="M4 11c-5 0-4-6 0-6 1-5 8-5 9 0 4 0 4 6 0 6z" fill="#bbb"/></svg>
  <svg width="16" height="14" style="margin-left:7px" stroke="#222"><path d="M.6 5h3L7 1.500v11L3.600 9h-3zM9.500 5c1 1 1 3 0 4M12 3c2 2 2 6 0 8M14.500 1.500c2 3 2 8 0 11"/></svg>
  <span style="margin-left:10px;width:24px;font-size:12px">ENG</span>
  <div class="text-center" style="width:60px;margin-left:7px;line-height:18px;font-size:12px;letter-spacing:-.045em">2:29 AM<br>8/4/2024</div>
  <svg width="26" height="28" style="margin-left:14px"><path d="M0 5h16v13H7l-4 4v-4H0z" fill="#000"/><path d="M3 9h10M3 12h10M3 15h6" stroke="#fff"/><circle cx="15" cy="20" r="7.500" fill="#c9c9c9" stroke="#666"/><text x="12.500" y="24" font-size="11" fill="#111">1</text></svg>
 </div>
</footer>
<script>
const bars=(id,rows,scale,unit,ticks)=>{
  document.getElementById(id).innerHTML=ticks.map(t=>`<div class="gridline" style="left:${t}px"></div>`).join('')+rows.map(([n,v])=>`<div class="brow position-relative"><span class="nm">${n}</span><i style="width:${v*scale}px"></i>${unit?v.toFixed(1)+unit:v}</div>`).join('');
};
bars('c1',[['Jillian Car...',473],['Michael B...',450],['Tsvi Reiter',429],['Linda Mit...',418],['Jae Pak',348],['José Saraiva',271],['Shu Ito',242],['Garrett Va...',234],['David Ca...',189],['Ranjit Var...',175]],.35,'',[84,154,224]);
bars('c2',[['Linda Mit...',10.4],['Jillian Car...',10.1],['Michael B...',9.3],['Jae Pak',8.5],['Tsvi Reiter',7.2],['Shu Ito',6.4],['José Saraiva',5.9],['Ranjit Var...',4.5],['David Ca...',3.7],['Garrett Va...',3.6]],13.67,'M',[84,152,221]);
const M=`Amy Alberts|||7|373|29|1553
David Campbell|28|596|63|2662|72|3697
Garrett Vargas|30|746|80|3897|89|5212
Jae Pak|||111|8768|170|13005
Jillian Carson|59|2053|166|9396|185|11973
José Saraiva|56|1896|86|3944|86|6344
Linda Mitchell|46|1289|151|9349|162|12884
Lynn Tsoflias|||||66|2470
Michael Blythe|65|1394|148|8456|175|10391
Pamela Ansman-Wolfe|22|709|45|2705|19|2822
Rachel Valdez|||||86|5033
Ranjit Varkey Chudukatil|||42|3160|94|8235
Shu Ito|33|1293|74|5114|98|6940
Stephen Jiang|4|30|22|1061|14|1364
Syed Abbas|||||12|755
Tete Mensa-Annan|||24|1171|82|3182
Tsvi Reiter|63|1681|153|5780|159|6950`;
document.getElementById('mb').innerHTML=M.split('\n').map((r,i)=>'<tr>'+r.split('|').map((c,j)=>`<td${i==15&&j==1?' class="hot"':''}${j==6?' style="padding-right:0"':''}>${c}</td>`).join('')+'</tr>').join('');
const arrow=d=>`<svg width="12" height="12" class="g" style="margin-left:13px"><path d="${d?'M0 3l6 6 6-6':'M2 0l6 6-6 6'}"/></svg>`;
document.getElementById('tree').innerHTML=
 `<div class="trow">${arrow(1)}<svg width="12" height="14" style="margin:0 6px 0 4px"><use href="#calc"/></svg>DaxMeasures</div>`+
 ['# Orders by du...','# Orders by ord...','# Orders by shi...','QTY','Total Due','Total freight','Total Orders','Total Sub Toatl','Total Tax'].map(t=>`<div class="trow"><i class="tcheck"></i><svg width="12" height="14" style="margin-right:6px"><use href="#calc"/></svg>${t}</div>`).join('')+
 ['Date-Dim','Sales vSalesPerson','V_Dim_Product','V_Dim_ShipMethod','V_Dim_Status','V_Dim_Territory','V_Fact_Sales'].map((t,i)=>`<div class="trow">${arrow(0)}<svg width="12" height="12" style="margin:0 6px 0 4px"><use href="#tbl"/>${i?'':'<rect x="6" y="4" width="9" height="11" fill="#f3f2f1"/><use href="#calc" x="7" y="5" width="7" height="9"/>'}</svg>${t}</div>`).join('');
</script>
<script src="https://cdn.jsdelivr.net/npm/bootstrap@5.3.0/dist/js/bootstrap.bundle.min.js"></script>
</body>
</html>
